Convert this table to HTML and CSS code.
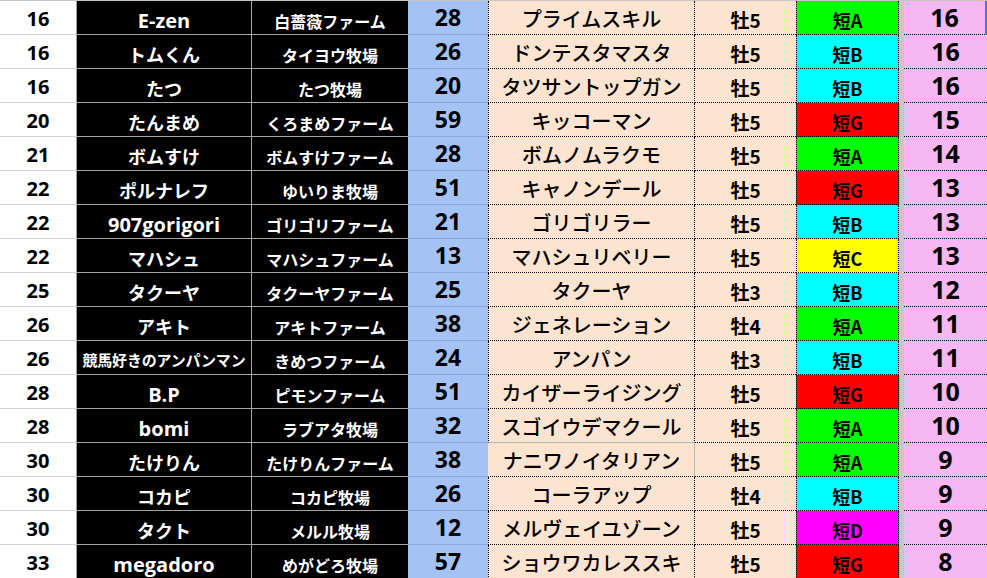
FILE: index.html
```html
<!DOCTYPE html>
<html lang="ja">
<head>
<meta charset="utf-8">
<title>Ranking</title>
<link rel="stylesheet" href="styles.css">
</head>
<body>
<div class="sheet">
  <div class="row"><div class="c rank">16</div><div class="c name lat">E-zen</div><div class="c farm">白薔薇ファーム</div><div class="c num">28</div><div class="c horse">プライムスキル</div><div class="c sex">牡5</div><div class="c grade g-a">短A</div><div class="c gap"></div><div class="c pt sel">16</div></div>
  <div class="row"><div class="c rank">16</div><div class="c name">トムくん</div><div class="c farm">タイヨウ牧場</div><div class="c num">26</div><div class="c horse">ドンテスタマスタ</div><div class="c sex">牡5</div><div class="c grade g-b">短B</div><div class="c gap"></div><div class="c pt">16</div></div>
  <div class="row"><div class="c rank">16</div><div class="c name">たつ</div><div class="c farm">たつ牧場</div><div class="c num">20</div><div class="c horse">タツサントップガン</div><div class="c sex">牡5</div><div class="c grade g-b">短B</div><div class="c gap"></div><div class="c pt">16</div></div>
  <div class="row"><div class="c rank">20</div><div class="c name">たんまめ</div><div class="c farm">くろまめファーム</div><div class="c num">59</div><div class="c horse">キッコーマン</div><div class="c sex">牡5</div><div class="c grade g-g">短G</div><div class="c gap"></div><div class="c pt">15</div></div>
  <div class="row"><div class="c rank">21</div><div class="c name">ボムすけ</div><div class="c farm">ボムすけファーム</div><div class="c num">28</div><div class="c horse">ボムノムラクモ</div><div class="c sex">牡5</div><div class="c grade g-a">短A</div><div class="c gap"></div><div class="c pt">14</div></div>
  <div class="row"><div class="c rank">22</div><div class="c name">ポルナレフ</div><div class="c farm">ゆいりま牧場</div><div class="c num">51</div><div class="c horse">キャノンデール</div><div class="c sex">牡5</div><div class="c grade g-g">短G</div><div class="c gap"></div><div class="c pt">13</div></div>
  <div class="row"><div class="c rank">22</div><div class="c name lat">907gorigori</div><div class="c farm">ゴリゴリファーム</div><div class="c num">21</div><div class="c horse">ゴリゴリラー</div><div class="c sex">牡5</div><div class="c grade g-b">短B</div><div class="c gap"></div><div class="c pt">13</div></div>
  <div class="row"><div class="c rank">22</div><div class="c name">マハシュ</div><div class="c farm">マハシュファーム</div><div class="c num">13</div><div class="c horse">マハシュリベリー</div><div class="c sex">牡5</div><div class="c grade g-c">短C</div><div class="c gap"></div><div class="c pt">13</div></div>
  <div class="row"><div class="c rank">25</div><div class="c name">タクーヤ</div><div class="c farm">タクーヤファーム</div><div class="c num">25</div><div class="c horse">タクーヤ</div><div class="c sex">牡3</div><div class="c grade g-b">短B</div><div class="c gap"></div><div class="c pt">12</div></div>
  <div class="row"><div class="c rank">26</div><div class="c name">アキト</div><div class="c farm">アキトファーム</div><div class="c num">38</div><div class="c horse">ジェネレーション</div><div class="c sex">牡4</div><div class="c grade g-a">短A</div><div class="c gap"></div><div class="c pt">11</div></div>
  <div class="row"><div class="c rank">26</div><div class="c name small">競馬好きのアンパンマン</div><div class="c farm">きめつファーム</div><div class="c num">24</div><div class="c horse">アンパン</div><div class="c sex">牡3</div><div class="c grade g-b">短B</div><div class="c gap"></div><div class="c pt">11</div></div>
  <div class="row"><div class="c rank">28</div><div class="c name lat">B.P</div><div class="c farm">ピモンファーム</div><div class="c num">51</div><div class="c horse">カイザーライジング</div><div class="c sex">牡5</div><div class="c grade g-g">短G</div><div class="c gap"></div><div class="c pt">10</div></div>
  <div class="row"><div class="c rank">28</div><div class="c name lat">bomi</div><div class="c farm">ラブアタ牧場</div><div class="c num">32</div><div class="c horse above">スゴイウデマクール</div><div class="c sex">牡5</div><div class="c grade g-a">短A</div><div class="c gap"></div><div class="c pt">10</div></div>
  <div class="row"><div class="c rank">30</div><div class="c name">たけりん</div><div class="c farm">たけりんファーム</div><div class="c num">38</div><div class="c horse plain">ナニワノイタリアン</div><div class="c sex">牡5</div><div class="c grade g-a">短A</div><div class="c gap"></div><div class="c pt">9</div></div>
  <div class="row"><div class="c rank">30</div><div class="c name">コカピ</div><div class="c farm">コカピ牧場</div><div class="c num">26</div><div class="c horse">コーラアップ</div><div class="c sex">牡4</div><div class="c grade g-b">短B</div><div class="c gap"></div><div class="c pt">9</div></div>
  <div class="row"><div class="c rank">30</div><div class="c name">タクト</div><div class="c farm">メルル牧場</div><div class="c num">12</div><div class="c horse">メルヴェイユゾーン</div><div class="c sex">牡5</div><div class="c grade g-d">短D</div><div class="c gap"></div><div class="c pt">9</div></div>
  <div class="row"><div class="c rank">33</div><div class="c name lat">megadoro</div><div class="c farm">めがどろ牧場</div><div class="c num">57</div><div class="c horse">ショウワカレススキ</div><div class="c sex">牡5</div><div class="c grade g-g">短G</div><div class="c gap"></div><div class="c pt">8</div></div>
</div>
</body>
</html>
```
FILE: styles.css
```css
html, body {
  margin: 0;
  padding: 0;
  background: #ffffff;
}

.sheet {
  width: 987px;
  border-top: 1px solid #c6c6c6;
  font-family: "Noto Sans CJK JP", "Noto Sans", sans-serif;
  font-weight: 700;
  color: #000;
}

.row {
  display: grid;
  grid-template-columns: 77px 175px 156px 80px 207px 101px 103px 5px 83px;
  height: 34px;
}

.c {
  display: flex;
  align-items: flex-end;
  justify-content: center;
  box-sizing: border-box;
  height: 34px;
  white-space: nowrap;
  overflow: hidden;
}

.rank {
  background: #ffffff;
  border-right: 1px solid #9e9e9e;
  border-bottom: 1px solid #d4d4d4;
  font-family: "Open Sans", "Noto Sans", sans-serif;
  font-size: 20px;
  line-height: 26px;
  padding-bottom: 2px;
}

.name {
  background: #000;
  color: #fff;
  border-right: 1px solid #a6a6a6;
  border-bottom: 1px solid #a6a6a6;
  font-size: 18px;
  line-height: 26px;
  padding-bottom: 1px;
}

.name.lat {
  font-family: "Open Sans", "Noto Sans", sans-serif;
  font-size: 20px;
  line-height: 26px;
  padding-bottom: 0;
}

.name.small {
  font-size: 15px;
  letter-spacing: -0.2px;
}

.farm {
  background: #000;
  color: #fff;
  border-bottom: 1px solid #a6a6a6;
  font-size: 16px;
  line-height: 24px;
  padding-bottom: 1px;
}

.num {
  background: #a4c2f4;
  border-bottom: 1px solid #8eaadb;
  font-family: "Open Sans", "Noto Sans", sans-serif;
  font-size: 23px;
  line-height: 30px;
  padding-bottom: 2px;
}

.horse {
  background: #fce4d0;
  border-left: 1px dotted #000;
  border-right: 1px dotted #000;
  border-bottom: 1px dotted #000;
  font-size: 20px;
  font-weight: 500;
  line-height: 28px;
  padding-bottom: 1px;
}

.horse.above {
  border-bottom: 1px solid #b8b8b8;
}

.horse.plain {
  border-left: 1px solid #fce4d0;
  border-right: 1px solid #b8b8b8;
}

.sex {
  background: #fce4d0;
  border-bottom: 1px dotted #000;
  font-size: 19px;
  line-height: 26px;
  padding-bottom: 1px;
}

.grade {
  border-left: 1px dotted #000;
  border-right: 1px dotted #000;
  border-bottom: 1px dotted #000;
  font-size: 18px;
  line-height: 26px;
  padding-bottom: 1px;
}

.g-a { background: #00ff00; }
.g-b { background: #00ffff; }
.g-c { background: #ffff00; }
.g-d { background: #ff00ff; }
.g-g { background: #ff0000; }

.gap {
  background: #c8c8c8;
}

.pt {
  background: #f5b8f3;
  border-bottom: 1px dotted #000;
  font-family: "Open Sans", "Noto Sans", sans-serif;
  font-size: 25px;
  line-height: 32px;
  padding-bottom: 1px;
}

.pt.sel {
  border-right: 2px solid #3b7ddd;
}
```
